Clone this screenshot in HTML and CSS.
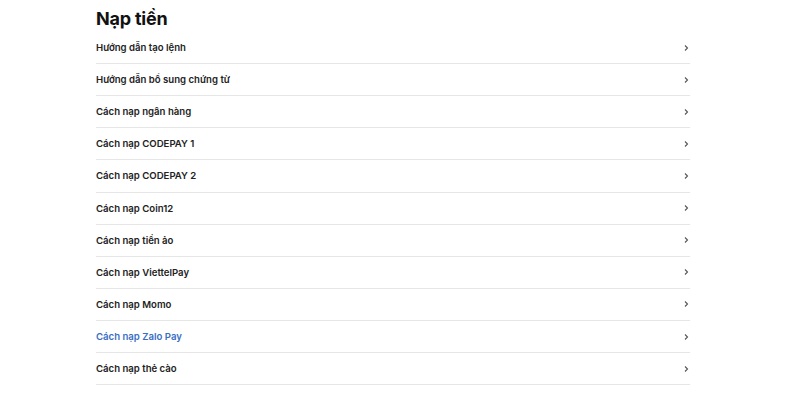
FILE: index.html
```html
<!DOCTYPE html>
<html lang="vi">
<head>
<meta charset="utf-8">
<link rel="stylesheet" href="styles.css">
</head>
<body>
<main class="page">
  <h1 class="title">Nạp tiền</h1>
  <ul class="list">
    <li class="row"><span>Hướng dẫn tạo lệnh</span><svg class="chev" viewBox="0 0 6 8"><path d="M2 1.5 L4.5 4 L2 6.5"/></svg></li>
    <li class="row"><span>Hướng dẫn bổ sung chứng từ</span><svg class="chev" viewBox="0 0 6 8"><path d="M2 1.5 L4.5 4 L2 6.5"/></svg></li>
    <li class="row"><span>Cách nạp ngân hàng</span><svg class="chev" viewBox="0 0 6 8"><path d="M2 1.5 L4.5 4 L2 6.5"/></svg></li>
    <li class="row"><span>Cách nạp CODEPAY 1</span><svg class="chev" viewBox="0 0 6 8"><path d="M2 1.5 L4.5 4 L2 6.5"/></svg></li>
    <li class="row"><span>Cách nạp CODEPAY 2</span><svg class="chev" viewBox="0 0 6 8"><path d="M2 1.5 L4.5 4 L2 6.5"/></svg></li>
    <li class="row"><span>Cách nạp Coin12</span><svg class="chev" viewBox="0 0 6 8"><path d="M2 1.5 L4.5 4 L2 6.5"/></svg></li>
    <li class="row"><span>Cách nạp tiền ảo</span><svg class="chev" viewBox="0 0 6 8"><path d="M2 1.5 L4.5 4 L2 6.5"/></svg></li>
    <li class="row"><span>Cách nạp ViettelPay</span><svg class="chev" viewBox="0 0 6 8"><path d="M2 1.5 L4.5 4 L2 6.5"/></svg></li>
    <li class="row"><span>Cách nạp Momo</span><svg class="chev" viewBox="0 0 6 8"><path d="M2 1.5 L4.5 4 L2 6.5"/></svg></li>
    <li class="row active"><span>Cách nạp Zalo Pay</span><svg class="chev" viewBox="0 0 6 8"><path d="M2 1.5 L4.5 4 L2 6.5"/></svg></li>
    <li class="row"><span>Cách nạp thẻ cào</span><svg class="chev" viewBox="0 0 6 8"><path d="M2 1.5 L4.5 4 L2 6.5"/></svg></li>
  </ul>
</main>
</body>
</html>
```
FILE: styles.css
```css
html, body {
  margin: 0;
  padding: 0;
  background: #ffffff;
}
body {
  font-family: Inter, "Noto Sans", "Liberation Sans", sans-serif;
  color: #1f1f1f;
}
.page {
  width: 594px;
  margin-left: 96px;
}
.title {
  margin: 0;
  height: 32px;
  display: flex;
  align-items: center;
  font-size: 18px;
  font-weight: 700;
  color: #111;
  letter-spacing: -0.2px;
  padding-top: 5px;
  box-sizing: border-box;
}
.list {
  list-style: none;
  margin: 0;
  padding: 0;
}
.row {
  height: 31.12px;
  border-bottom: 1px solid #e6e6e6;
  display: flex;
  align-items: center;
  justify-content: space-between;
  font-size: 9.6px;
  font-weight: 600;
  color: #222;
}
.row.active {
  color: #3a6ec4;
}
.chev {
  width: 6px;
  height: 8px;
  margin-right: 1px;
  fill: none;
  stroke: #555;
  stroke-width: 1.1;
}
```
